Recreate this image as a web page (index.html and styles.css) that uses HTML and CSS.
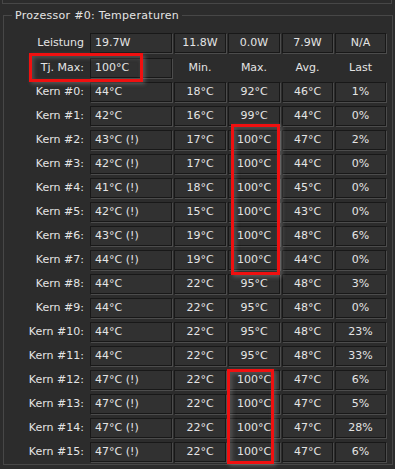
FILE: index.html
```html
<!DOCTYPE html>
<html lang="de">
<head>
<meta charset="utf-8">
<title>Prozessor #0: Temperaturen</title>
<link rel="stylesheet" href="styles.css">
</head>
<body>
<div class="window">
  <div class="prev"></div>
  <div class="group">
    <div class="legend">Prozessor #0: Temperaturen</div>
    <div class="grid">
      <div class="lbl">Leistung</div><div class="cell val">19.7W</div><div class="cell">11.8W</div><div class="cell">0.0W</div><div class="cell">7.9W</div><div class="cell">N/A</div>
      <div class="lbl">Tj. Max:</div><div class="cell val">100°C</div><div class="hdr">Min.</div><div class="hdr">Max.</div><div class="hdr">Avg.</div><div class="hdr">Last</div>
      <div class="lbl">Kern #0:</div><div class="cell val">44°C</div><div class="cell">18°C</div><div class="cell">92°C</div><div class="cell">46°C</div><div class="cell">1%</div>
      <div class="lbl">Kern #1:</div><div class="cell val">42°C</div><div class="cell">16°C</div><div class="cell">99°C</div><div class="cell">44°C</div><div class="cell">0%</div>
      <div class="lbl">Kern #2:</div><div class="cell val">43°C (!)</div><div class="cell">17°C</div><div class="cell">100°C</div><div class="cell">47°C</div><div class="cell">2%</div>
      <div class="lbl">Kern #3:</div><div class="cell val">42°C (!)</div><div class="cell">17°C</div><div class="cell">100°C</div><div class="cell">44°C</div><div class="cell">0%</div>
      <div class="lbl">Kern #4:</div><div class="cell val">41°C (!)</div><div class="cell">18°C</div><div class="cell">100°C</div><div class="cell">45°C</div><div class="cell">0%</div>
      <div class="lbl">Kern #5:</div><div class="cell val">42°C (!)</div><div class="cell">15°C</div><div class="cell">100°C</div><div class="cell">43°C</div><div class="cell">0%</div>
      <div class="lbl">Kern #6:</div><div class="cell val">43°C (!)</div><div class="cell">19°C</div><div class="cell">100°C</div><div class="cell">48°C</div><div class="cell">6%</div>
      <div class="lbl">Kern #7:</div><div class="cell val">44°C (!)</div><div class="cell">19°C</div><div class="cell">100°C</div><div class="cell">44°C</div><div class="cell">0%</div>
      <div class="lbl">Kern #8:</div><div class="cell val">44°C</div><div class="cell">22°C</div><div class="cell">95°C</div><div class="cell">48°C</div><div class="cell">3%</div>
      <div class="lbl">Kern #9:</div><div class="cell val">44°C</div><div class="cell">22°C</div><div class="cell">95°C</div><div class="cell">48°C</div><div class="cell">0%</div>
      <div class="lbl">Kern #10:</div><div class="cell val">44°C</div><div class="cell">22°C</div><div class="cell">95°C</div><div class="cell">48°C</div><div class="cell">23%</div>
      <div class="lbl">Kern #11:</div><div class="cell val">44°C</div><div class="cell">22°C</div><div class="cell">95°C</div><div class="cell">48°C</div><div class="cell">33%</div>
      <div class="lbl">Kern #12:</div><div class="cell val">47°C (!)</div><div class="cell">22°C</div><div class="cell">100°C</div><div class="cell">47°C</div><div class="cell">6%</div>
      <div class="lbl">Kern #13:</div><div class="cell val">47°C (!)</div><div class="cell">22°C</div><div class="cell">100°C</div><div class="cell">47°C</div><div class="cell">5%</div>
      <div class="lbl">Kern #14:</div><div class="cell val">47°C (!)</div><div class="cell">22°C</div><div class="cell">100°C</div><div class="cell">47°C</div><div class="cell">28%</div>
      <div class="lbl">Kern #15:</div><div class="cell val">47°C (!)</div><div class="cell">22°C</div><div class="cell">100°C</div><div class="cell">47°C</div><div class="cell">6%</div>
    </div>
  </div>
  <div class="mark mark-tj"></div>
  <div class="mark mark-a"></div>
  <div class="mark mark-b"></div>
</div>
</body>
</html>
```
FILE: styles.css
```css
html, body {
  margin: 0;
  background: #2c2c2c;
}
body {
  color: #e4e4e4;
  font: 11px "DejaVu Sans", "Liberation Sans", sans-serif;
}
.window {
  position: relative;
  width: 395px;
  height: 469px;
  overflow: hidden;
}
.prev {
  height: 3px;
  margin: 0 3px 0 2px;
  border: 1px solid #474747;
  border-top: none;
}
.group {
  position: relative;
  margin: 11px 2px 0 3px;
  border: 1px solid #474747;
  padding: 17px 0 2px 0;
}
.legend {
  position: absolute;
  top: -8px;
  left: 8px;
  padding: 0 3px;
  line-height: 15px;
  background: #2c2c2c;
  letter-spacing: 0.3px;
  white-space: nowrap;
}
.grid {
  display: grid;
  grid-template-columns: 84px 82px 52px 52px 51px 51px;
  grid-template-rows: 21px;
  grid-auto-rows: 20px;
  column-gap: 2px;
  row-gap: 4px;
}
.lbl {
  text-align: right;
  padding-right: 4px;
  line-height: 20px;
  height: 20px;
  white-space: nowrap;
}
.hdr {
  text-align: center;
  line-height: 20px;
  height: 20px;
}
.cell {
  box-sizing: border-box;
  height: 20px;
  border: 1px solid #181818;
  box-shadow: 1px 1px 0 #4c4c4c;
  background: #313131;
  text-align: center;
  line-height: 18px;
  white-space: nowrap;
}
.cell.val {
  text-align: left;
  padding-left: 4px;
}
.mark {
  position: absolute;
  box-sizing: border-box;
  border: 3px solid #f01010;
  box-shadow: 2px 2px 4px rgba(170, 170, 170, 0.35), inset 2px 2px 4px rgba(170, 170, 170, 0.3);
}
.mark-tj {
  left: 29px;
  top: 53px;
  width: 114px;
  height: 29px;
}
.mark-a {
  left: 231px;
  top: 124px;
  width: 49px;
  height: 151px;
}
.mark-b {
  left: 227px;
  top: 369px;
  width: 47px;
  height: 95px;
}
```
